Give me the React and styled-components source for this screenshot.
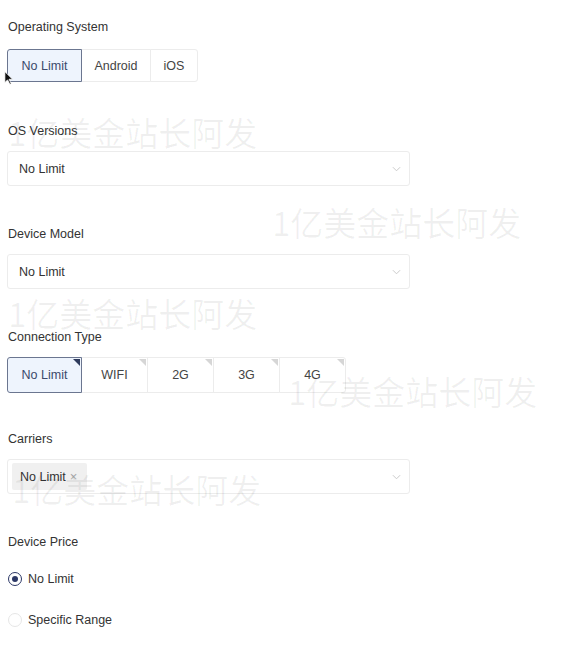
import React from 'react';
import styled, { createGlobalStyle } from 'styled-components';

const GlobalStyle = createGlobalStyle`
  body {
    margin: 0;
    background: #fff;
    font-family: "Liberation Sans", Arial, sans-serif;
    color: #333;
  }
`;

const WATERMARKS = [
  { x: 8, y: 113 },
  { x: 272, y: 203 },
  { x: 8, y: 294 },
  { x: 288, y: 372 },
  { x: 12, y: 470 },
];

const App = () => (
  <Page>
    <GlobalStyle />

    <Section $gap={12} $space={39}>
      <Label>Operating System</Label>
      <ButtonGroup>
        <OptionButton $active $width={75}>No Limit</OptionButton>
        <OptionButton $width={70}>Android</OptionButton>
        <OptionButton $width={48}>iOS</OptionButton>
      </ButtonGroup>
    </Section>

    <Section $gap={10} $space={38}>
      <Label>OS Versions</Label>
      <Select>
        <SelectValue>No Limit</SelectValue>
        <Chevron />
      </Select>
    </Section>

    <Section $gap={10} $space={38}>
      <Label>Device Model</Label>
      <Select>
        <SelectValue>No Limit</SelectValue>
        <Chevron />
      </Select>
    </Section>

    <Section $gap={10} $space={36}>
      <Label>Connection Type</Label>
      <ButtonGroup>
        {['No Limit', 'WIFI', '2G', '3G', '4G'].map((name, i) => (
          <OptionButton key={name} $active={i === 0} $width={i === 0 ? 75 : 67} $tall>
            {name}
            <Corner $active={i === 0} />
          </OptionButton>
        ))}
      </ButtonGroup>
    </Section>

    <Section $gap={10} $space={38}>
      <Label>Carriers</Label>
      <Select $tags>
        <Tag>
          No Limit <TagClose>×</TagClose>
        </Tag>
        <Chevron />
      </Select>
    </Section>

    <Section $gap={10} $space={0}>
      <Label>Device Price</Label>
      <RadioList>
        <RadioRow>
          <Radio $checked />
          No Limit
        </RadioRow>
        <RadioRow>
          <Radio />
          Specific Range
        </RadioRow>
      </RadioList>
    </Section>

    {WATERMARKS.map((w, i) => (
      <Watermark key={i} style={{ left: w.x, top: w.y }}>1亿美金站长阿发</Watermark>
    ))}

    <Cursor viewBox="0 0 10 16" width="9" height="16">
      <path d="M1 1 L1 13 L4 10 L6.5 15 L8 14.3 L5.6 9.4 L9.5 9.4 Z" fill="#111" stroke="#fff" strokeWidth="0.8" />
    </Cursor>
  </Page>
);

const Chevron = () => (
  <ChevronIcon viewBox="0 0 10 6" width="9" height="6">
    <path d="M1 1 L5 5 L9 1" fill="none" stroke="#c4c4c4" strokeWidth="1" />
  </ChevronIcon>
);

const Page = styled.div`
  position: relative;
  width: 562px;
  height: 650px;
  padding: 17px 0 0 7px;
  box-sizing: border-box;
  overflow: hidden;
`;

const Section = styled.div`
  display: flex;
  flex-direction: column;
  gap: ${p => p.$gap}px;
  margin-bottom: ${p => p.$space}px;
`;

const Label = styled.div`
  font-size: 12.5px;
  line-height: 20px;
  color: #333;
  padding-left: 1px;
`;

const ButtonGroup = styled.div`
  display: flex;
`;

const OptionButton = styled.div`
  position: relative;
  width: ${p => p.$width}px;
  height: ${p => (p.$tall ? 36 : 33)}px;
  box-sizing: border-box;
  display: flex;
  align-items: center;
  justify-content: center;
  font-size: 12.5px;
  color: ${p => (p.$active ? '#3b4a6b' : '#444')};
  background: ${p => (p.$active ? '#eef4fd' : '#fff')};
  border: 1px solid ${p => (p.$active ? '#6b7690' : '#ececec')};
  margin-left: -1px;
  z-index: ${p => (p.$active ? 1 : 0)};

  &:first-child {
    margin-left: 0;
    border-radius: 3px 0 0 3px;
  }

  &:last-child {
    border-radius: 0 3px 3px 0;
  }
`;

const Corner = styled.span`
  position: absolute;
  top: 1px;
  right: 1px;
  width: 0;
  height: 0;
  border-style: solid;
  border-width: 0 7px 7px 0;
  border-color: transparent ${p => (p.$active ? '#2e3a5c' : '#d6d6d6')} transparent transparent;
`;

const Select = styled.div`
  width: 403px;
  height: 35px;
  box-sizing: border-box;
  border: 1px solid #ececec;
  border-radius: 3px;
  display: flex;
  align-items: center;
  justify-content: space-between;
  padding: 0 ${p => (p.$tags ? '8px 0 4px' : '8px 0 11px')};
`;

const SelectValue = styled.span`
  font-size: 12.5px;
  color: #333;
`;

const ChevronIcon = styled.svg`
  display: block;
`;

const Tag = styled.span`
  display: flex;
  align-items: center;
  gap: 4px;
  height: 27px;
  padding: 0 10px 0 8px;
  background: #f0f0f0;
  border-radius: 2px;
  font-size: 12.5px;
  color: #333;
`;

const TagClose = styled.span`
  color: #aaa;
  font-size: 13px;
`;

const RadioList = styled.div`
  display: flex;
  flex-direction: column;
  gap: 21px;
  padding-top: 7px;
`;

const RadioRow = styled.label`
  display: flex;
  align-items: center;
  gap: 6px;
  font-size: 12.5px;
  line-height: 20px;
  color: #333;
  padding-left: 1px;
`;

const Radio = styled.span`
  width: 14px;
  height: 14px;
  box-sizing: border-box;
  border-radius: 50%;
  border: 1px solid ${p => (p.$checked ? '#2b3766' : '#e6e6e6')};
  display: flex;
  align-items: center;
  justify-content: center;

  &::after {
    content: '';
    width: 6px;
    height: 6px;
    border-radius: 50%;
    background: ${p => (p.$checked ? '#2b3766' : 'transparent')};
  }
`;

const Watermark = styled.div`
  position: absolute;
  font-family: "Noto Sans CJK SC", "Liberation Sans", sans-serif;
  font-size: 33px;
  line-height: 38px;
  color: rgba(0, 0, 0, 0.06);
  white-space: nowrap;
  pointer-events: none;
`;

const Cursor = styled.svg`
  position: absolute;
  left: 4px;
  top: 70px;
  z-index: 5;
`;

export default App;
